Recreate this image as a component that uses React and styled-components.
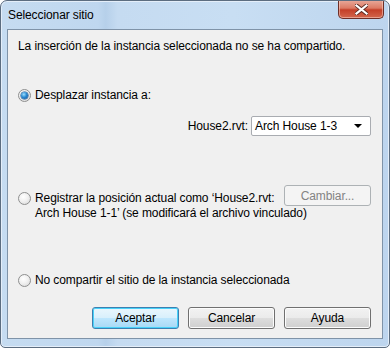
import React, { useState } from "react";
import styled, { createGlobalStyle, css } from "styled-components";

const GlobalStyle = createGlobalStyle`
  html, body { margin: 0; padding: 0; background: #ffffff; }
  body {
    font-family: "Segoe UI", "Liberation Sans", Arial, sans-serif;
    font-size: 12px;
    letter-spacing: -0.1px;
    color: #000;
  }
`;

const Window = styled.div`
  width: 390px;
  height: 348px;
  box-sizing: border-box;
  border: 1px solid #5c6d80;
  border-radius: 7px 7px 5px 5px;
  background: linear-gradient(90deg, #c6dcf1 0%, #bfd7ef 25%, #b6d0ea 27%, #c5dbf1 30%, #c8def3 60%, #bdd5ee 100%);
  box-shadow: inset 0 0 0 1px #e4eef9;
  display: flex;
  flex-direction: column;
  overflow: hidden;
`;

const TitleBar = styled.div`
  height: 28px;
  display: flex;
  align-items: flex-start;
  justify-content: space-between;
  padding-left: 7px;
`;

const Title = styled.div`
  margin-top: 7px;
  font-size: 12px;
  color: #000;
`;

const CloseButton = styled.div`
  width: 46px;
  height: 19px;
  margin-right: 5px;
  margin-top: -1px;
  box-sizing: border-box;
  border: 1px solid #6d2e27;
  border-top: none;
  border-radius: 0 0 5px 5px;
  background: linear-gradient(180deg, #e9ab9c 0%, #dc7a64 45%, #c43f28 55%, #d2664c 100%);
  box-shadow: inset 0 0 0 1px rgba(255, 220, 210, 0.5);
  display: flex;
  align-items: center;
  justify-content: center;
`;

const Client = styled.div`
  flex: 1;
  margin: 0 6px 8px 6px;
  border: 1px solid #7f93a8;
  background: #f0f0f0;
  padding: 9px 10px 0 10px;
  display: flex;
  flex-direction: column;
`;

const Text = styled.div`
  line-height: 15px;
  white-space: nowrap;
`;

const RadioRow = styled.div`
  display: flex;
  align-items: flex-start;
  gap: 4px;
  margin-top: ${(p) => p.$top}px;
`;

const RadioDot = styled.span`
  flex: none;
  width: 13px;
  height: 13px;
  margin-top: 1px;
  box-sizing: border-box;
  border-radius: 50%;
  border: 1px solid #8e8f8f;
  background: radial-gradient(circle at 40% 35%, #ffffff 0%, #f1f1f1 45%, #d5d5d5 100%);
  display: flex;
  align-items: center;
  justify-content: center;
  ${(p) =>
    p.$checked &&
    css`
      &::after {
        content: "";
        width: 7px;
        height: 7px;
        border-radius: 50%;
        background: radial-gradient(circle at 40% 35%, #9fe0ff 0%, #2b8ad1 45%, #0b4e9a 100%);
        box-shadow: 0 0 0 0.5px #1a4d80;
      }
    `}
`;

const TargetRow = styled.div`
  display: flex;
  justify-content: flex-end;
  align-items: center;
  gap: 3px;
  margin-top: 13px;
  padding-right: 1px;
`;

const Select = styled.div`
  width: 120px;
  height: 20px;
  box-sizing: border-box;
  border: 1px solid #a9acb1;
  border-radius: 2px;
  background: #ffffff;
  display: flex;
  align-items: center;
  justify-content: space-between;
  padding: 0 8px 0 3px;
`;

const Arrow = styled.span`
  width: 0;
  height: 0;
  border-left: 4px solid transparent;
  border-right: 4px solid transparent;
  border-top: 4px solid #000;
`;

const TextBlock = styled.div`
  flex: 1;
  display: flex;
  flex-direction: column;
`;

const LineWithButton = styled.div`
  display: flex;
  align-items: flex-start;
  height: 15px;
`;

const Button = styled.div`
  flex: none;
  width: 87px;
  height: 22px;
  box-sizing: border-box;
  border: 1px solid #707070;
  border-radius: 3px;
  background: linear-gradient(180deg, #f2f2f2 0%, #ebebeb 48%, #dddddd 52%, #cfcfcf 100%);
  box-shadow: inset 0 0 0 1px #fcfcfc;
  display: flex;
  align-items: center;
  justify-content: center;
  font-size: 12px;
  ${(p) =>
    p.$default &&
    css`
      border-color: #3c7fb1;
      background: linear-gradient(180deg, #eaf6fd 0%, #d9f0fc 48%, #bee6fd 52%, #a7d9f5 100%);
      box-shadow: inset 0 0 0 1px #48d2f9;
    `}
  ${(p) =>
    p.$disabled &&
    css`
      border-color: #adb2b5;
      background: #f4f4f4;
      box-shadow: none;
      color: #838383;
    `}
`;

const SmallButton = styled(Button)`
  height: 21px;
  margin-top: -6px;
  margin-left: auto;
  margin-right: 1px;
`;

const Buttons = styled.div`
  display: flex;
  justify-content: flex-end;
  gap: 9px;
  margin-top: 19px;
  padding-right: 1px;
`;

export default function App() {
  const [mode, setMode] = useState("move");

  return (
    <>
      <GlobalStyle />
      <Window>
        <TitleBar>
          <Title>Seleccionar sitio</Title>
          <CloseButton>
            <svg width="13" height="11" viewBox="0 0 13 11">
              <path
                d="M1.5 1.5 L11.5 9.5 M11.5 1.5 L1.5 9.5"
                stroke="#5a2a22"
                strokeWidth="4"
                strokeLinecap="square"
              />
              <path
                d="M1.5 1.5 L11.5 9.5 M11.5 1.5 L1.5 9.5"
                stroke="#ffffff"
                strokeWidth="2.2"
                strokeLinecap="square"
              />
            </svg>
          </CloseButton>
        </TitleBar>
        <Client>
          <Text>La inserción de la instancia seleccionada no se ha compartido.</Text>

          <RadioRow $top={34} onClick={() => setMode("move")}>
            <RadioDot $checked={mode === "move"} />
            <Text>Desplazar instancia a:</Text>
          </RadioRow>

          <TargetRow>
            <Text>House2.rvt:</Text>
            <Select>
              <span>Arch House 1-3</span>
              <Arrow />
            </Select>
          </TargetRow>

          <RadioRow $top={55} onClick={() => setMode("record")}>
            <RadioDot $checked={mode === "record"} />
            <TextBlock>
              <LineWithButton>
                <Text>Registrar la posición actual como ‘House2.rvt:</Text>
                <SmallButton $disabled>Cambiar...</SmallButton>
              </LineWithButton>
              <Text>Arch House 1-1’ (se modificará el archivo vinculado)</Text>
            </TextBlock>
          </RadioRow>

          <RadioRow $top={52} onClick={() => setMode("none")}>
            <RadioDot $checked={mode === "none"} />
            <Text>No compartir el sitio de la instancia seleccionada</Text>
          </RadioRow>

          <Buttons>
            <Button $default>Aceptar</Button>
            <Button>Cancelar</Button>
            <Button>Ayuda</Button>
          </Buttons>
        </Client>
      </Window>
    </>
  );
}
